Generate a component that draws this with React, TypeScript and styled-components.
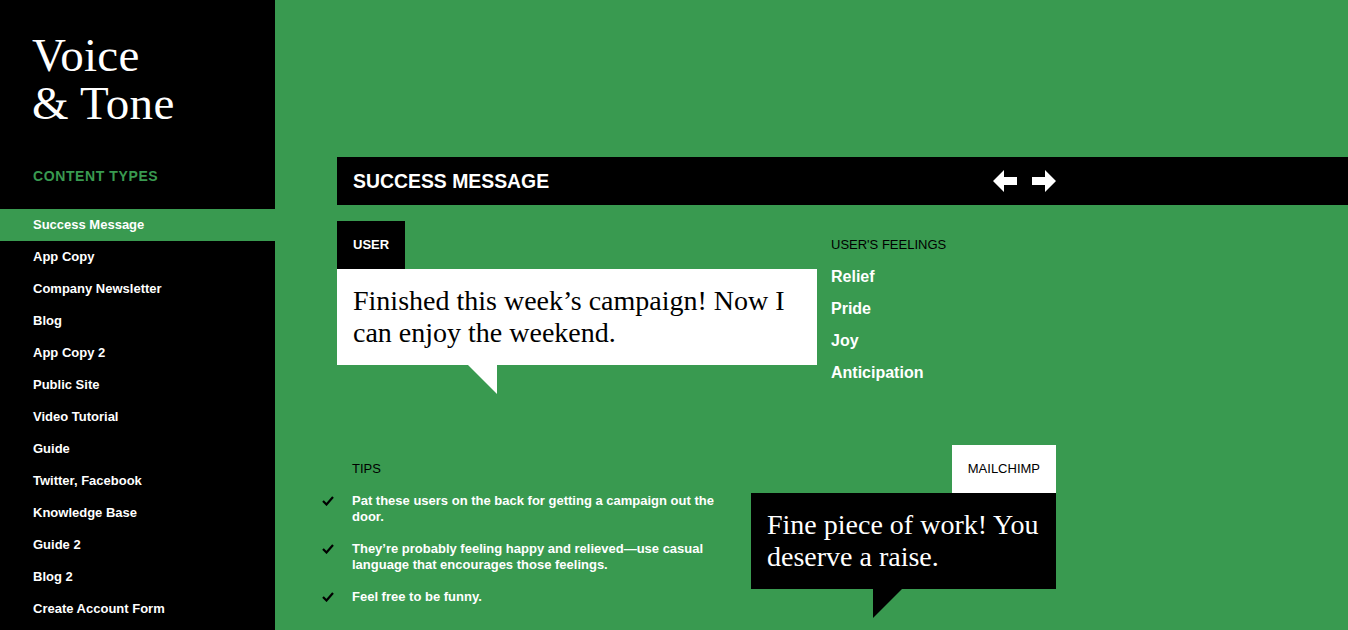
import * as React from "react";
import styled, { createGlobalStyle } from "styled-components";

const GREEN = "#399a50";
const BLACK = "#000000";
const WHITE = "#ffffff";

const contentTypes = [
  "Success Message",
  "App Copy",
  "Company Newsletter",
  "Blog",
  "App Copy 2",
  "Public Site",
  "Video Tutorial",
  "Guide",
  "Twitter, Facebook",
  "Knowledge Base",
  "Guide 2",
  "Blog 2",
  "Create Account Form",
];

const feelings = ["Relief", "Pride", "Joy", "Anticipation"];

const tips = [
  "Pat these users on the back for getting a campaign out the door.",
  "They\u2019re probably feeling happy and relieved\u2014use casual language that encourages those feelings.",
  "Feel free to be funny.",
];

const GlobalStyle = createGlobalStyle`
  html, body {
    margin: 0;
    padding: 0;
    overflow: hidden;
  }
  body {
    font-family: "Liberation Sans", Arial, sans-serif;
    background: ${GREEN};
  }
`;

const ArrowLeft = () => (
  <svg width="24" height="22" viewBox="0 0 24 22">
    <path d="M0 11 L11 0 L11 7 L24 7 L24 15 L11 15 L11 22 Z" fill={WHITE} />
  </svg>
);

const ArrowRight = () => (
  <svg width="24" height="22" viewBox="0 0 24 22">
    <path d="M24 11 L13 0 L13 7 L0 7 L0 15 L13 15 L13 22 Z" fill={WHITE} />
  </svg>
);

const Check = () => (
  <svg width="12" height="10" viewBox="0 0 12 10">
    <path d="M1 5 L4.5 8.5 L11 1" fill="none" stroke={BLACK} strokeWidth="2.2" />
  </svg>
);

const App: React.FC = () => {
  return (
    <Page>
      <GlobalStyle />
      <Sidebar>
        <Title>
          Voice
          <br />& Tone
        </Title>
        <NavHeading>CONTENT TYPES</NavHeading>
        <NavList>
          {contentTypes.map((name, i) => (
            <NavItem key={name} active={i === 0}>
              {name}
            </NavItem>
          ))}
        </NavList>
      </Sidebar>
      <Main>
        <HeaderBar>
          <HeaderInner>
            <HeaderTitle>SUCCESS MESSAGE</HeaderTitle>
            <Arrows>
              <ArrowButton aria-label="Previous">
                <ArrowLeft />
              </ArrowButton>
              <ArrowButton aria-label="Next">
                <ArrowRight />
              </ArrowButton>
            </Arrows>
          </HeaderInner>
        </HeaderBar>
        <Content>
          <TopRow>
            <UserBlock>
              <Tag dark>USER</Tag>
              <Bubble dark={false}>
                Finished this week’s campaign! Now I can enjoy the weekend.
              </Bubble>
              <Tail dark={false} offset={131} />
            </UserBlock>
            <Feelings>
              <SmallHeading>USER'S FEELINGS</SmallHeading>
              {feelings.map(f => (
                <Feeling key={f}>{f}</Feeling>
              ))}
            </Feelings>
          </TopRow>
          <BottomRow>
            <Tips>
              <SmallHeading>TIPS</SmallHeading>
              <TipList>
                {tips.map(t => (
                  <Tip key={t}>
                    <CheckMark>
                      <Check />
                    </CheckMark>
                    <span>{t}</span>
                  </Tip>
                ))}
              </TipList>
            </Tips>
            <ReplyBlock>
              <Tag dark={false}>MAILCHIMP</Tag>
              <Bubble dark>Fine piece of work! You deserve a raise.</Bubble>
              <Tail dark offset={122} />
            </ReplyBlock>
          </BottomRow>
        </Content>
      </Main>
    </Page>
  );
};

const Page = styled.div`
  display: flex;
  min-height: 100vh;
`;

const Sidebar = styled.aside`
  flex: 0 0 275px;
  background: ${BLACK};
  min-height: 100vh;
`;

const Title = styled.h1`
  margin: 31px 0 0;
  padding-left: 32px;
  font-family: "Liberation Serif", "Times New Roman", serif;
  font-weight: normal;
  font-size: 47px;
  line-height: 48px;
  letter-spacing: 0.3px;
  color: ${WHITE};
`;

const NavHeading = styled.h2`
  margin: 33px 0 17px;
  padding-left: 33px;
  font-size: 14px;
  line-height: 32px;
  font-weight: bold;
  letter-spacing: 0.6px;
  color: ${GREEN};
`;

const NavList = styled.ul`
  list-style: none;
  margin: 0;
  padding: 0;
`;

const NavItem = styled.li<{ active: boolean }>`
  height: 32px;
  line-height: 32px;
  padding-left: 33px;
  font-size: 13px;
  font-weight: bold;
  color: ${WHITE};
  background: ${p => (p.active ? GREEN : "transparent")};
`;

const Main = styled.main`
  flex: 1;
  padding: 157px 0 0 62px;
`;

const HeaderBar = styled.div`
  background: ${BLACK};
  height: 48px;
`;

const HeaderInner = styled.div`
  width: 719px;
  height: 100%;
  display: flex;
  align-items: center;
  justify-content: space-between;
  padding-left: 16px;
  box-sizing: border-box;
`;

const HeaderTitle = styled.h2`
  margin: 0;
  font-size: 19.4px;
  font-weight: bold;
  color: ${WHITE};
`;

const Arrows = styled.div`
  display: flex;
  gap: 15px;
`;

const ArrowButton = styled.button`
  display: flex;
  padding: 0;
  border: none;
  background: none;
  cursor: pointer;
`;

const Content = styled.div`
  width: 719px;
`;

const TopRow = styled.div`
  display: flex;
  margin-top: 16px;
`;

const UserBlock = styled.div`
  width: 480px;
  display: flex;
  flex-direction: column;
  align-items: flex-start;
`;

const Tag = styled.div<{ dark: boolean }>`
  height: 48px;
  line-height: 48px;
  padding: 0 16px;
  font-size: 13px;
  font-weight: ${p => (p.dark ? "bold" : "normal")};
  background: ${p => (p.dark ? BLACK : WHITE)};
  color: ${p => (p.dark ? WHITE : BLACK)};
`;

const Bubble = styled.p<{ dark: boolean }>`
  margin: 0;
  align-self: stretch;
  padding: 16px 8px 16px 16px;
  font-family: "Liberation Serif", "Times New Roman", serif;
  font-size: 28px;
  line-height: 32px;
  background: ${p => (p.dark ? BLACK : WHITE)};
  color: ${p => (p.dark ? WHITE : BLACK)};
`;

const Tail = styled.div<{ dark: boolean; offset: number }>`
  align-self: flex-start;
  width: 29px;
  height: 29px;
  margin-left: ${p => p.offset}px;
  background: ${p => (p.dark ? BLACK : WHITE)};
  clip-path: ${p =>
    p.dark ? "polygon(0 0, 100% 0, 0 100%)" : "polygon(0 0, 100% 0, 100% 100%)"};
`;

const Feelings = styled.div`
  margin-left: 14px;
  padding-top: 1px;
  display: flex;
  flex-direction: column;
`;

const SmallHeading = styled.h3`
  margin: 0 0 8px;
  padding-top: 15px;
  font-size: 13px;
  font-weight: normal;
  line-height: 16px;
  color: ${BLACK};
`;

const Feeling = styled.div`
  font-size: 16px;
  font-weight: bold;
  line-height: 32px;
  color: ${WHITE};
`;

const BottomRow = styled.div`
  display: flex;
  margin-top: 51px;
`;

const Tips = styled.div`
  width: 414px;
  padding: 1px 0 0 15px;
  box-sizing: border-box;
`;

const TipList = styled.ul`
  list-style: none;
  margin: 16px 0 0;
  padding: 0;
  width: 383px;
`;

const Tip = styled.li`
  display: flex;
  align-items: flex-start;
  margin-bottom: 16px;
  font-size: 13px;
  font-weight: bold;
  line-height: 16px;
  color: ${WHITE};
`;

const CheckMark = styled.span`
  flex: 0 0 12px;
  margin: 3px 18px 0 -30px;
  display: flex;
`;

const ReplyBlock = styled.div`
  width: 305px;
  display: flex;
  flex-direction: column;
  align-items: flex-end;
`;

export default App;
